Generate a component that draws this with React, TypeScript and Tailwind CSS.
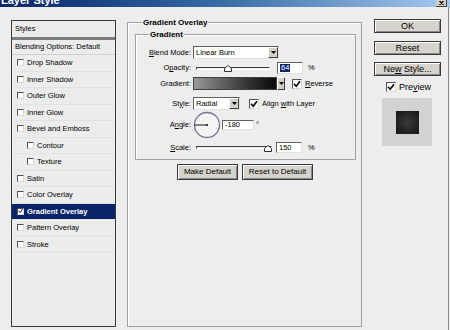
import React from "react";

const Check = ({ checked, big }: { checked?: boolean; big?: boolean }) => (
  <span
    className={
      (big ? "w-[10px] h-[10px] " : "w-[7px] h-[7px] ") +
      "shrink-0 flex items-center justify-center border border-t-[#505050] border-l-[#505050] border-b-[#d8d8d8] border-r-[#d8d8d8] bg-white"
    }
  >
    {checked && (
      <svg width={big ? 8 : 6} height={big ? 8 : 6} viewBox="0 0 8 8">
        <path d="M1 3.8 L3.2 6.2 L7 1.2" fill="none" stroke="#000" strokeWidth={big ? 1.6 : 1.5} />
      </svg>
    )}
  </span>
);

const Arrow = ({ w = 9 }: { w?: number }) => (
  <span
    className="h-full shrink-0 bg-[#d4d0c8] flex items-center justify-center border border-t-[#fff] border-l-[#fff] border-b-[#404040] border-r-[#404040]"
    style={{ width: w }}
  >
    <svg width="5" height="3" viewBox="0 0 5 3">
      <path d="M0 0 H5 L2.5 3 Z" fill="#000" />
    </svg>
  </span>
);

const Btn = ({ children, cls }: { children: React.ReactNode; cls: string }) => (
  <div
    className={
      "flex items-center justify-center bg-[#d6d3cc] border border-[#3a3a3a] shadow-[inset_1px_1px_0_#fff,inset_-1px_-1px_0_#888] text-[8px] " +
      cls
    }
  >
    {children}
  </div>
);

const ListRow = ({
  label,
  indent,
  checked,
  active,
}: {
  label: string;
  indent?: boolean;
  checked?: boolean;
  active?: boolean;
}) => (
  <div
    className={
      "h-[16.5px] flex items-center border-b border-[#e2e2e2] " +
      (indent ? "pl-[15px] " : "pl-[5px] ") +
      (active ? "bg-[#0a246a] text-white font-bold" : "")
    }
  >
    <Check checked={checked} />
    <span className="ml-[3px]">{label}</span>
  </div>
);

const Slider = ({ pos, w }: { pos: number; w: number }) => (
  <div className="relative h-[12px] flex items-center" style={{ width: w }}>
    <div className="w-full h-[3px] border border-t-[#404040] border-l-[#404040] border-b-[#fff] border-r-[#fff] bg-[#e8e8e8]" />
    <svg className="absolute top-[3px]" style={{ left: pos - 4 }} width="8" height="7" viewBox="0 0 8 7">
      <path d="M4 0.5 L7.5 3.5 V6.5 H0.5 V3.5 Z" fill="#fff" stroke="#333" strokeWidth="1" />
    </svg>
  </div>
);

const Input = ({ children, cls }: { children: React.ReactNode; cls: string }) => (
  <div
    className={
      "bg-white flex items-center pl-[2px] border border-t-[#606060] border-l-[#606060] border-b-[#e0e0e0] border-r-[#e0e0e0] " +
      cls
    }
  >
    {children}
  </div>
);

export default function App() {
  const rows: { label: string; indent?: boolean; checked?: boolean; active?: boolean }[] = [
    { label: "Drop Shadow" },
    { label: "Inner Shadow" },
    { label: "Outer Glow" },
    { label: "Inner Glow" },
    { label: "Bevel and Emboss" },
    { label: "Contour", indent: true },
    { label: "Texture", indent: true },
    { label: "Satin" },
    { label: "Color Overlay" },
    { label: "Gradient Overlay", checked: true, active: true },
    { label: "Pattern Overlay" },
    { label: "Stroke" },
  ];

  return (
    <div className="w-[450px] h-[330px] bg-[#ededed] flex flex-col overflow-hidden font-['Liberation_Sans',Arial,sans-serif] text-[7.5px] text-black leading-none">
      {/* title bar */}
      <div className="h-[7px] shrink-0 bg-gradient-to-r from-[#0a246a] via-[#3a6ea5] to-[#a6caf0] flex justify-between overflow-hidden">
        <span className="text-white font-bold text-[11px] leading-[11px] -mt-[5px] ml-[1px]">Layer Style</span>
        <span className="w-[11px] h-[7px] mr-[3px] bg-[#d4d0c8] border-b border-r border-[#404040] flex items-center justify-center">
          <svg width="5" height="4" viewBox="0 0 5 4">
            <path d="M0.5 0 L4.5 4 M4.5 0 L0.5 4" stroke="#000" strokeWidth="1.2" />
          </svg>
        </span>
      </div>

      {/* body */}
      <div className="flex-1 flex pl-[11px] border-r border-[#8a8a8a] w-[449px]">
        {/* left list */}
        <div className="mt-[13px] w-[105px] h-[307px] border border-[#3a3a3a] flex flex-col bg-[#ececec]">
          <div className="h-[16px] flex items-center pl-[3px]">Styles</div>
          <div className="h-[3px] bg-[#7c7c7c]" />
          <div className="h-[15px] flex items-center pl-[3px] border-b border-[#cfcfcf]">Blending Options: Default</div>
          {rows.map((r) => (
            <ListRow key={r.label} {...r} />
          ))}
        </div>

        {/* middle group */}
        <div className="ml-[11px] mt-[15px] w-[235px] h-[305px] border border-[#a0a0a0] shadow-[inset_1px_1px_0_#fff] flex flex-col">
          <div className="-mt-[5px] ml-[14px] px-[1px] bg-[#ededed] w-fit h-[10px] leading-[10px] font-bold text-[8px]">
            Gradient Overlay
          </div>
          {/* inner group */}
          <div className="mt-[6px] ml-[7px] w-[221px] h-[126px] border border-[#a0a0a0] shadow-[inset_1px_1px_0_#fff] flex flex-col">
            <div className="-mt-[5px] ml-[13px] px-[1px] bg-[#ededed] w-fit h-[10px] leading-[10px] font-bold text-[8px]">
              Gradient
            </div>

            {/* Blend mode */}
            <div className="mt-[6px] h-[13px] flex items-center">
              <span className="w-[55px] text-right">
                <u>B</u>lend Mode:
              </span>
              <div className="ml-[2px] w-[86px] h-[13px] bg-white flex items-center justify-between border border-t-[#606060] border-l-[#606060] border-b-[#e0e0e0] border-r-[#e0e0e0]">
                <span className="pl-[2px]">Linear Burn</span>
                <Arrow w={10} />
              </div>
            </div>

            {/* Opacity */}
            <div className="mt-[3px] h-[12px] flex items-center">
              <span className="w-[55px] text-right">
                O<u>p</u>acity:
              </span>
              <div className="ml-[5px]">
                <Slider pos={32} w={74} />
              </div>
              <Input cls="ml-[7px] w-[26px] h-[12px]">
                <span className="bg-[#0a246a] text-white px-[1px]">64</span>
              </Input>
              <span className="ml-[5px]">%</span>
            </div>

            {/* Gradient */}
            <div className="mt-[3px] h-[13px] flex items-center">
              <span className="w-[55px] text-right">Gradient:</span>
              <div className="ml-[2px] w-[84px] h-[13px] border border-[#404040] bg-gradient-to-r from-[#9a9a9a] via-[#4a4a4a] to-[#0a0a0a]" />
              <Arrow w={8} />
              <div className="ml-[7px] flex items-center">
                <Check checked big />
                <span className="ml-[3px]">
                  <u>R</u>everse
                </span>
              </div>
            </div>

            {/* Style */}
            <div className="mt-[7px] h-[13px] flex items-center">
              <span className="w-[55px] text-right">
                St<u>y</u>le:
              </span>
              <div className="ml-[2px] w-[47px] h-[13px] bg-white flex items-center justify-between border border-t-[#606060] border-l-[#606060] border-b-[#e0e0e0] border-r-[#e0e0e0]">
                <span className="pl-[2px]">Radial</span>
                <Arrow w={10} />
              </div>
              <div className="ml-[9px] flex items-center">
                <Check checked big />
                <span className="ml-[3px]">
                  Align <u>w</u>ith Layer
                </span>
              </div>
            </div>

            {/* Angle */}
            <div className="mt-[2px] h-[26px] flex items-center">
              <span className="w-[55px] text-right">
                A<u>n</u>gle:
              </span>
              <svg className="ml-[2px]" width="28" height="28" viewBox="0 0 28 28">
                <circle cx="14" cy="14" r="12.5" fill="#f4f4f4" stroke="#6f7396" strokeWidth="1.3" />
                <line x1="1.5" y1="14" x2="14" y2="14" stroke="#111" strokeWidth="1" />
                <circle cx="14" cy="14" r="1" fill="#111" />
              </svg>
              <Input cls="ml-[1px] w-[32px] h-[10px]">-180</Input>
              <span className="ml-[2px] self-start mt-[9px]">°</span>
            </div>

            {/* Scale */}
            <div className="mt-[4px] h-[11px] flex items-center">
              <span className="w-[55px] text-right">
                <u>S</u>cale:
              </span>
              <div className="ml-[5px]">
                <Slider pos={72} w={76} />
              </div>
              <Input cls="ml-[4px] w-[26px] h-[11px]">150</Input>
              <span className="ml-[6px]">%</span>
            </div>
          </div>

          {/* buttons */}
          <div className="mt-[4px] flex justify-center gap-[4px] pl-[1px]">
            <Btn cls="w-[61px] h-[16px]">Make Default</Btn>
            <Btn cls="w-[71px] h-[16px]">Reset to Default</Btn>
          </div>
        </div>

        {/* right column */}
        <div className="ml-[12px] mt-[12px] w-[67px] flex flex-col">
          <Btn cls="h-[14px] text-[9px]">OK</Btn>
          <Btn cls="mt-[8px] h-[14px] text-[9px]">Reset</Btn>
          <Btn cls="mt-[7px] h-[14px] text-[9px]">
            Ne<u>w</u>&nbsp;Style...
          </Btn>
          <div className="mt-[6px] ml-[12px] flex items-center text-[9px]">
            <Check checked big />
            <span className="ml-[3px]">
              Pre<u>v</u>iew
            </span>
          </div>
          <div className="mt-[6px] ml-[8px] w-[50px] h-[48px] bg-[#d2d2d2] flex items-center justify-center">
            <div className="w-[23px] h-[23px] bg-[radial-gradient(circle,#3a3a3a,#141414)]" />
          </div>
        </div>
      </div>
    </div>
  );
}
